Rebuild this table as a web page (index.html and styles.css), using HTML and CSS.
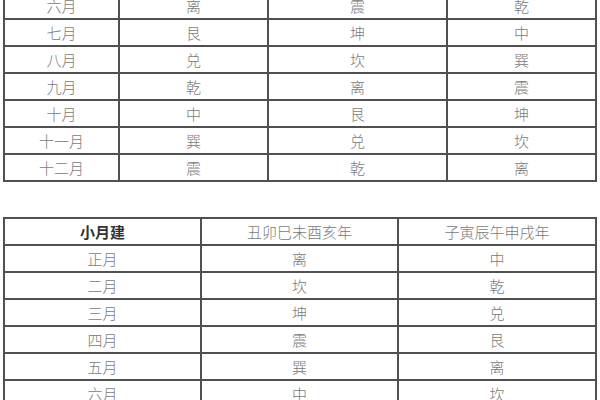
FILE: index.html
```html
<!DOCTYPE html>
<html lang="zh">
<head>
<meta charset="utf-8">
<link rel="stylesheet" href="styles.css">
</head>
<body>
<div class="page">
<table class="grid top">
<colgroup><col class="c1"><col class="c2"><col class="c3"><col class="c4"></colgroup>
<tr><td>六月</td><td>离</td><td>震</td><td>乾</td></tr>
<tr><td>七月</td><td>艮</td><td>坤</td><td>中</td></tr>
<tr><td>八月</td><td>兑</td><td>坎</td><td>巽</td></tr>
<tr><td>九月</td><td>乾</td><td>离</td><td>震</td></tr>
<tr><td>十月</td><td>中</td><td>艮</td><td>坤</td></tr>
<tr><td>十一月</td><td>巽</td><td>兑</td><td>坎</td></tr>
<tr><td>十二月</td><td>震</td><td>乾</td><td>离</td></tr>
</table>
<table class="grid bottom">
<colgroup><col class="b1"><col class="b2"><col class="b3"></colgroup>
<tr><td class="head">小月建</td><td>丑卯巳未酉亥年</td><td>子寅辰午申戌年</td></tr>
<tr><td>正月</td><td>离</td><td>中</td></tr>
<tr><td>二月</td><td>坎</td><td>乾</td></tr>
<tr><td>三月</td><td>坤</td><td>兑</td></tr>
<tr><td>四月</td><td>震</td><td>艮</td></tr>
<tr><td>五月</td><td>巽</td><td>离</td></tr>
<tr><td>六月</td><td>中</td><td>坎</td></tr>
</table>
</div>
</body>
</html>
```
FILE: styles.css
```css
html, body { margin: 0; padding: 0; background: #fff; }
.page { width: 600px; height: 400px; overflow: hidden; }
.grid {
  border-collapse: collapse;
  table-layout: fixed;
  width: 594px;
  margin-left: 3px;
  font-family: "Noto Sans CJK SC", sans-serif;
  font-size: 15px;
  font-weight: 300;
  color: #7a7a7a;
}
.grid td {
  border: 2px solid #505050;
  height: 25px;
  padding: 0;
  text-align: center;
  vertical-align: middle;
  line-height: 25px;
}
.top { margin-top: -9px; }
.bottom { margin-top: 35px; }
.c1 { width: 115px; }
.c2 { width: 149px; }
.c3 { width: 179px; }
.c4 { width: 149px; }
.b1 { width: 197px; }
.b2 { width: 197px; }
.b3 { width: 198px; }
.grid td.head { font-weight: 700; color: #333; }
```
